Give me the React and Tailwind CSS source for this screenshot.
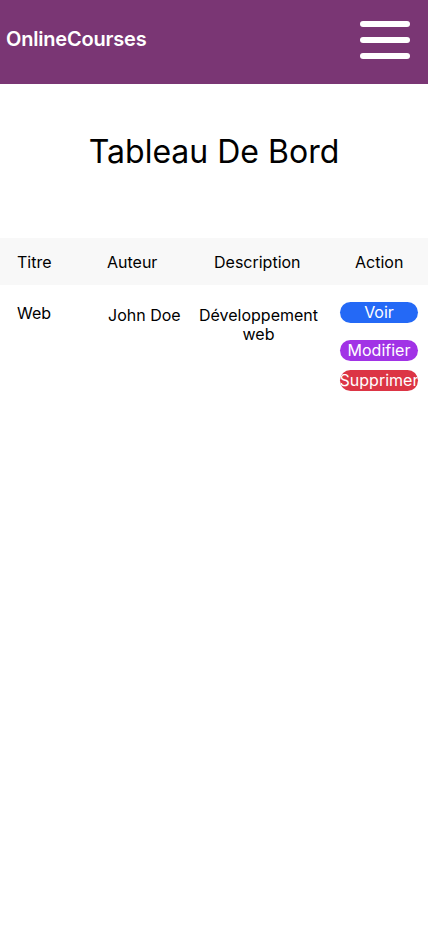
import React from "react";

export default function App() {
  const rows = [{ titre: "Web", auteur: "John Doe", description: "Développement web" }];

  return (
    <div className="min-h-screen bg-white text-black" style={{ fontFamily: "Inter, 'Noto Sans', sans-serif" }}>
      {/* Navbar */}
      <header className="h-[84px] bg-[#7a3674] flex items-center justify-between pl-[6px] pr-[18px]">
        <span className="text-white text-[20px] font-semibold tracking-[-0.2px] mb-[6px]">OnlineCourses</span>
        <button className="flex flex-col gap-[10px] w-[50px] -mt-[5px]">
          <span className="h-[6px] w-full rounded-full bg-white" />
          <span className="h-[6px] w-full rounded-full bg-white" />
          <span className="h-[6px] w-full rounded-full bg-white" />
        </button>
      </header>

      {/* Title */}
      <h1 className="text-center text-[32px] font-normal mt-[48px] mb-[66px] leading-[40px]">Tableau De Bord</h1>

      {/* Table */}
      <div className="grid grid-cols-[91px_107px_132px_98px] h-[47px] bg-[#f8f8f8] items-center text-[16px]">
        <div className="pl-[17px]">Titre</div>
        <div className="pl-[16px]">Auteur</div>
        <div className="pl-[16px]">Description</div>
        <div className="pl-[25px]">Action</div>
      </div>

      {rows.map((r, i) => (
        <div key={i} className="grid grid-cols-[91px_107px_132px_98px] text-[16px] leading-[19px]">
          <div className="pl-[17px] pt-[19px]">{r.titre}</div>
          <div className="pl-[17px] pt-[21px]">{r.auteur}</div>
          <div className="pt-[21px] text-center pr-[11px]">{r.description.split(" ")[0]}<br />{r.description.split(" ")[1]}</div>
          <div className="flex flex-col pl-[10px] pt-[17px]">
            <button className="w-[78px] h-[21px] rounded-full bg-[#2469f6] text-white leading-[21px] text-center">Voir</button>
            <button className="w-[78px] h-[21px] rounded-full bg-[#a133e6] text-white leading-[21px] text-center mt-[17px]">Modifier</button>
            <button className="w-[78px] h-[21px] rounded-full bg-[#dc3545] text-white leading-[21px] text-center mt-[9px] overflow-hidden whitespace-nowrap flex justify-center">Supprimer</button>
          </div>
        </div>
      ))}
    </div>
  );
}
